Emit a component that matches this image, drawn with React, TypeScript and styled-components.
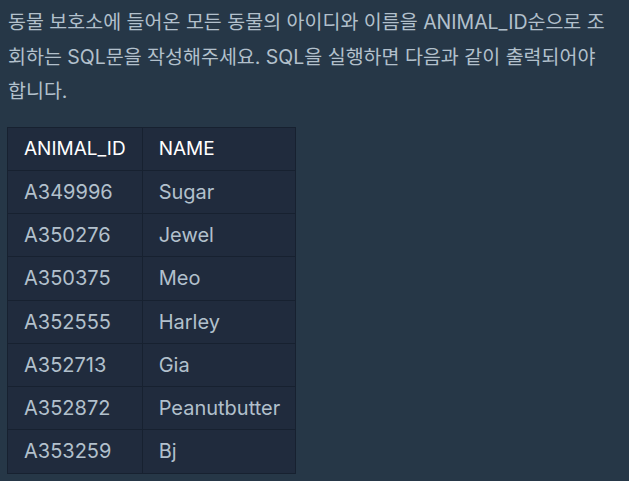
import styled, { createGlobalStyle } from "styled-components";

const GlobalStyle = createGlobalStyle`
  html, body {
    margin: 0;
    padding: 0;
    background: #263747;
  }
`;

const rows = [
  { id: "A349996", name: "Sugar" },
  { id: "A350276", name: "Jewel" },
  { id: "A350375", name: "Meo" },
  { id: "A352555", name: "Harley" },
  { id: "A352713", name: "Gia" },
  { id: "A352872", name: "Peanutbutter" },
  { id: "A353259", name: "Bj" },
];

export default function App() {
  return (
    <>
      <GlobalStyle />
      <Container>
        <Description>
          동물 보호소에 들어온 모든 동물의 아이디와 이름을 ANIMAL_ID순으로 조회하는 SQL문을 작성해주세요.
          SQL을 실행하면 다음과 같이 출력되어야 합니다.
        </Description>
        <Table>
          <thead>
            <tr>
              <HeadCell>ANIMAL_ID</HeadCell>
              <HeadCell>NAME</HeadCell>
            </tr>
          </thead>
          <tbody>
            {rows.map((row) => (
              <tr key={row.id}>
                <Cell>{row.id}</Cell>
                <Cell>{row.name}</Cell>
              </tr>
            ))}
          </tbody>
        </Table>
      </Container>
    </>
  );
}

// STYLED COMPONENTS
const Container = styled.div`
  padding: 0 16px 0 8px;
  font-family: Inter, "Noto Sans CJK KR", sans-serif;
  color: #b2c0cc;
`;

const Description = styled.p`
  margin: 0 0 18px;
  padding-top: 5px;
  font-size: 19.5px;
  line-height: 34.5px;
  word-break: break-all;
`;

const Table = styled.table`
  margin-left: -1px;
  border-collapse: collapse;
  background: #202b3d;
  border: 1px solid #172130;
`;

const HeadCell = styled.th`
  height: 43.25px;
  padding: 0 16px;
  box-sizing: border-box;
  text-align: left;
  font-weight: 400;
  font-size: 19px;
  color: #ffffff;
  border: 1px solid #172130;
`;

const Cell = styled.td`
  height: 43.25px;
  padding: 0 15px 0 16px;
  box-sizing: border-box;
  font-size: 20px;
  border: 1px solid #172130;
`;
